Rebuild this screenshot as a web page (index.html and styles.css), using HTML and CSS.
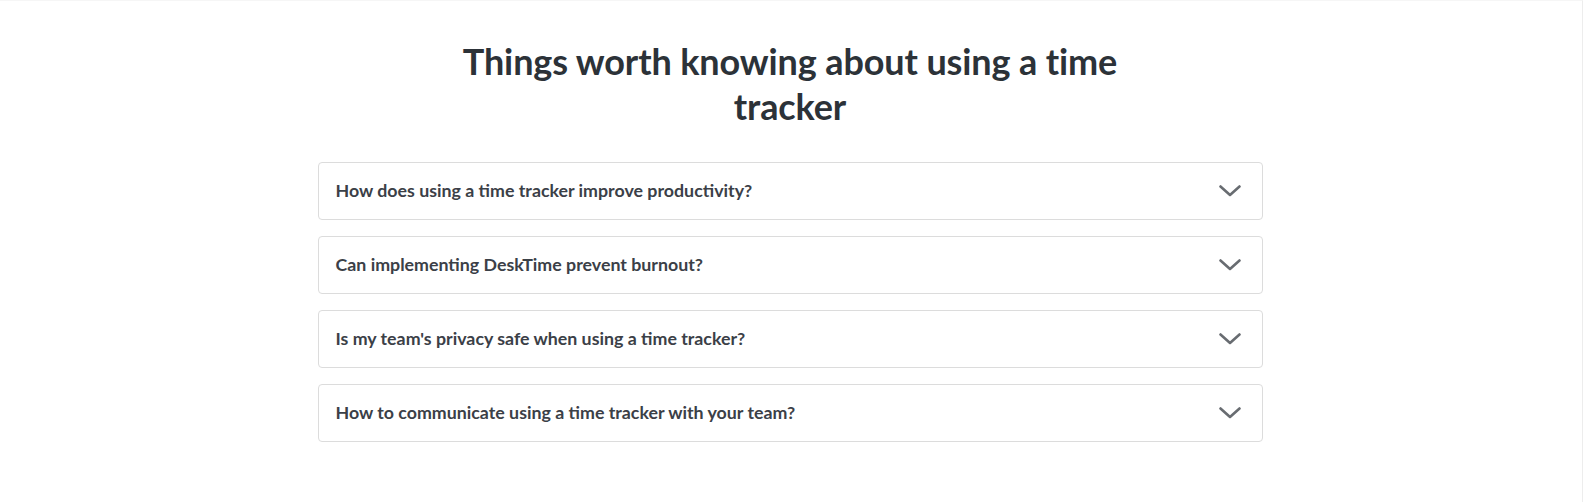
FILE: index.html
```html
<!DOCTYPE html>
<html lang="en">
<head>
<meta charset="utf-8">
<title>FAQ</title>
<link rel="stylesheet" href="styles.css">
</head>
<body>
<div class="page">
  <section class="faq">
    <h2 class="faq-title">Things worth knowing about using a time<br>tracker</h2>
    <div class="faq-list">
      <div class="faq-item">
        <span class="faq-q">How does using a time tracker improve productivity?</span>
        <svg class="chev" viewBox="0 0 22 12" width="22" height="12"><path d="M1.5 1.5 L11 10 L20.5 1.5" fill="none" stroke="#686c71" stroke-width="2.6" stroke-linecap="round" stroke-linejoin="round"/></svg>
      </div>
      <div class="faq-item">
        <span class="faq-q">Can implementing DeskTime prevent burnout?</span>
        <svg class="chev" viewBox="0 0 22 12" width="22" height="12"><path d="M1.5 1.5 L11 10 L20.5 1.5" fill="none" stroke="#686c71" stroke-width="2.6" stroke-linecap="round" stroke-linejoin="round"/></svg>
      </div>
      <div class="faq-item">
        <span class="faq-q">Is my team's privacy safe when using a time tracker?</span>
        <svg class="chev" viewBox="0 0 22 12" width="22" height="12"><path d="M1.5 1.5 L11 10 L20.5 1.5" fill="none" stroke="#686c71" stroke-width="2.6" stroke-linecap="round" stroke-linejoin="round"/></svg>
      </div>
      <div class="faq-item">
        <span class="faq-q">How to communicate using a time tracker with your team?</span>
        <svg class="chev" viewBox="0 0 22 12" width="22" height="12"><path d="M1.5 1.5 L11 10 L20.5 1.5" fill="none" stroke="#686c71" stroke-width="2.6" stroke-linecap="round" stroke-linejoin="round"/></svg>
      </div>
    </div>
  </section>
</div>
</body>
</html>
```
FILE: styles.css
```css
html, body {
  margin: 0;
  padding: 0;
  background: #ffffff;
}
body {
  font-family: Lato, "Open Sans", "Liberation Sans", sans-serif;
}
.page {
  height: 502px;
  box-sizing: border-box;
  border-right: 1px solid #ededed;
  border-top: 1px solid #f6f6f6;
}
.faq {
  width: 945px;
  margin: 0 auto;
  padding-top: 38px;
  transform: translateX(-1px);
}
.faq-title {
  margin: 0 0 33px;
  text-align: center;
  font-size: 36px;
  line-height: 45px;
  font-weight: 700;
  color: #2c3238;
  letter-spacing: -0.12px;
}
.faq-list {
  display: flex;
  flex-direction: column;
  gap: 16px;
}
.faq-item {
  height: 58px;
  box-sizing: border-box;
  border: 1px solid #dcdcdc;
  border-radius: 4px;
  display: flex;
  align-items: center;
  justify-content: space-between;
  padding: 0 21px 0 17px;
}
.faq-q {
  font-size: 17.8px;
  font-weight: 700;
  color: #3b4047;
  position: relative;
  top: -1px;
}
.chev {
  display: block;
}
```
